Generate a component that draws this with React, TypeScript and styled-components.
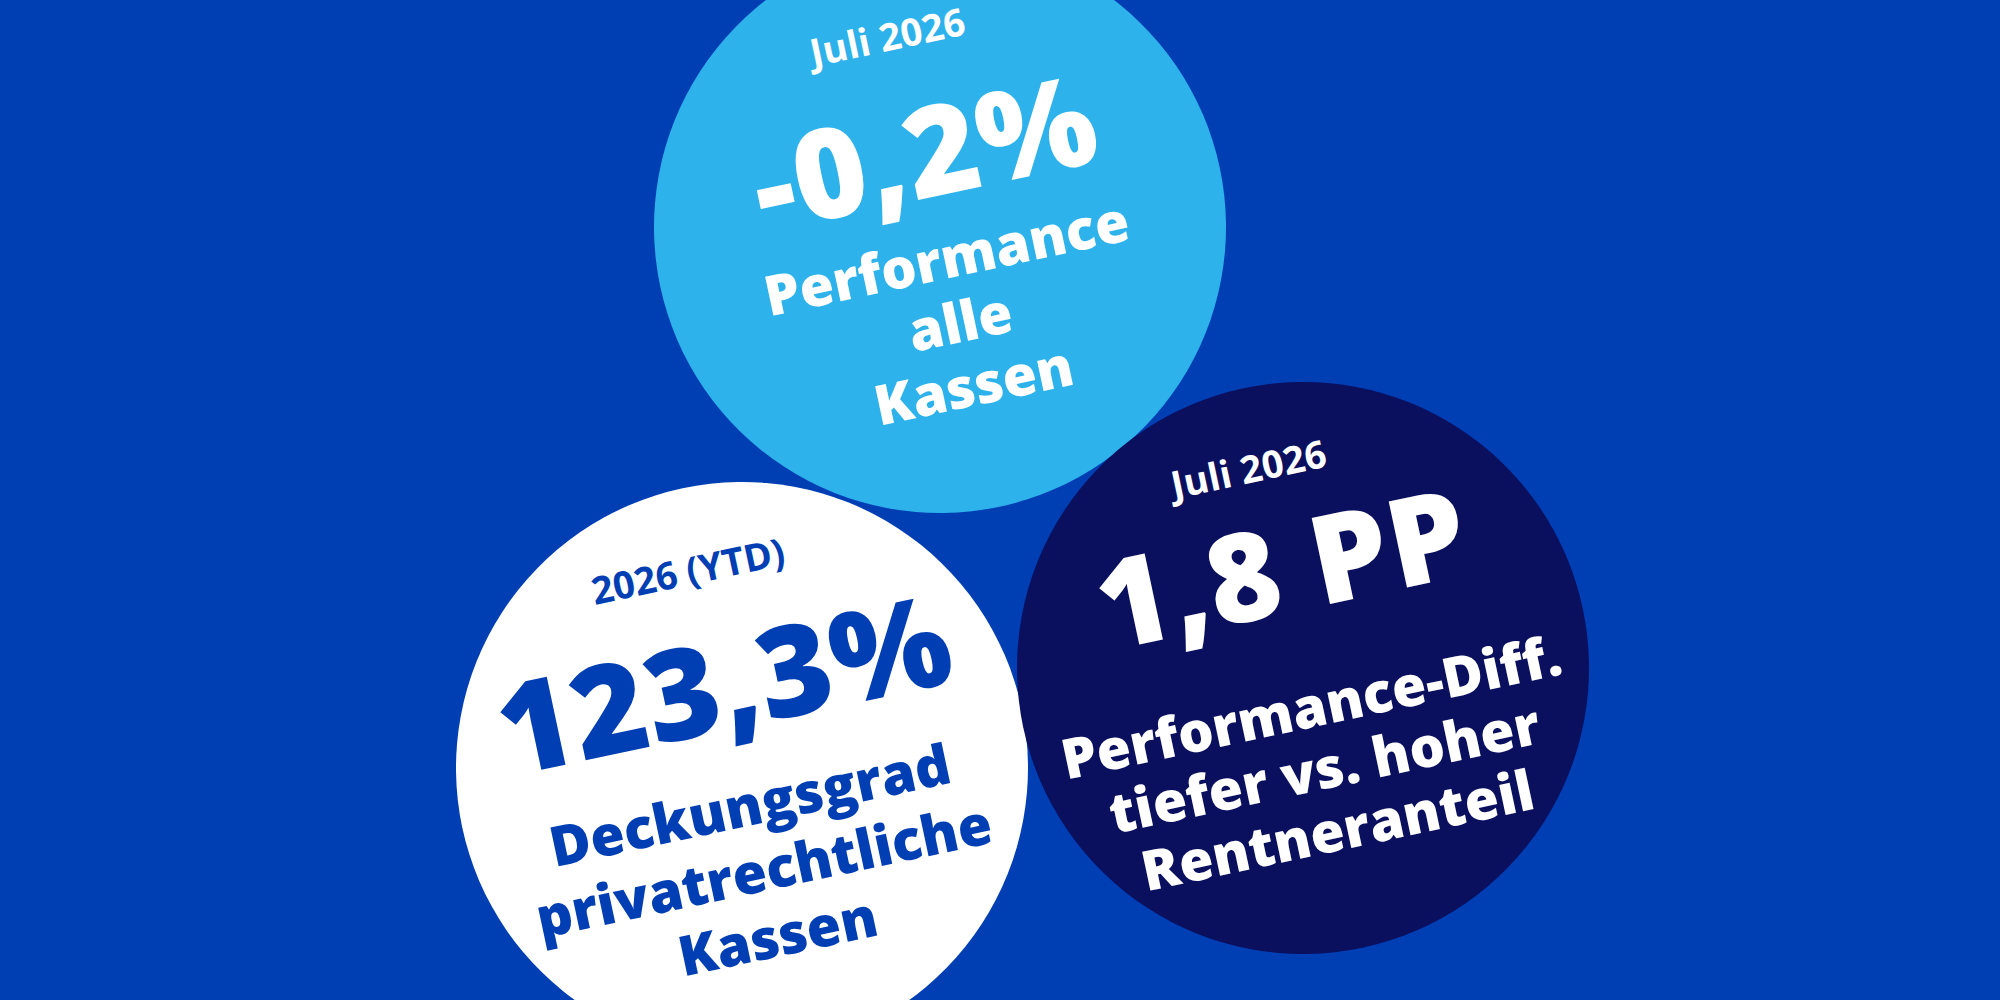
import React from "react";
import styled, { createGlobalStyle } from "styled-components";

const Global = createGlobalStyle`
  html, body { margin: 0; padding: 0; background: #003eb4; }
  body { font-family: "Open Sans", "Noto Sans", sans-serif; }
`;

const Canvas = styled.div`
  position: relative;
  width: 2000px;
  height: 1000px;
  overflow: hidden;
  background: #003eb4;
`;

const Bubble = styled.div<{ $x: number; $y: number; $bg: string; $fg: string }>`
  position: absolute;
  left: ${(p) => p.$x - 286}px;
  top: ${(p) => p.$y - 286}px;
  width: 572px;
  height: 572px;
  border-radius: 50%;
  background: ${(p) => p.$bg};
  color: ${(p) => p.$fg};
  display: flex;
  align-items: center;
  justify-content: center;
  transform: rotate(-12deg);
`;

const Content = styled.div<{ $shift: number }>`
  display: flex;
  flex-direction: column;
  align-items: center;
  text-align: center;
  white-space: nowrap;
  margin-top: ${(p) => p.$shift * 2}px;
`;

const Kicker = styled.div<{ $gap: number }>`
  font-size: 38px;
  line-height: 46px;
  font-weight: 700;
  margin-right: 24px;
  margin-bottom: ${(p) => p.$gap}px;
`;

const Figure = styled.div<{ $size: number; $gap: number }>`
  font-size: ${(p) => p.$size}px;
  line-height: 1.05;
  font-weight: 800;
  letter-spacing: 1px;
  margin-bottom: ${(p) => p.$gap}px;
`;

const Label = styled.div<{ $lh: number }>`
  font-size: 55.5px;
  line-height: ${(p) => p.$lh}px;
  font-weight: 800;
`;

type Stat = {
  x: number;
  y: number;
  bg: string;
  fg: string;
  shift: number;
  kicker: string;
  kGap: number;
  figure: string;
  fSize: number;
  fGap: number;
  lh: number;
  lines: string[];
};

const stats: Stat[] = [
  {
    x: 940, y: 227, bg: "#2db2eb", fg: "#ffffff", shift: -14,
    kicker: "Juli 2026", kGap: 30,
    figure: "-0,2%", fSize: 125, fGap: 12,
    lh: 65, lines: ["Performance", "alle", "Kassen"],
  },
  {
    x: 742, y: 768, bg: "#ffffff", fg: "#003eb4", shift: -12,
    kicker: "2026 (YTD)", kGap: 27,
    figure: "123,3%", fSize: 126, fGap: 26,
    lh: 67, lines: ["Deckungsgrad", "privatrechtliche", "Kassen"],
  },
  {
    x: 1303, y: 668, bg: "#0a0f5e", fg: "#ffffff", shift: -17,
    kicker: "Juli 2026", kGap: 15,
    figure: "1,8 PP", fSize: 123, fGap: 47,
    lh: 63, lines: ["Performance-Diff.", "tiefer vs. hoher", "Rentneranteil"],
  },
];

export default function App() {
  return (
    <>
      <Global />
      <Canvas>
        {stats.map((s, i) => (
          <Bubble key={i} $x={s.x} $y={s.y} $bg={s.bg} $fg={s.fg}>
            <Content $shift={s.shift}>
              <Kicker $gap={s.kGap}>{s.kicker}</Kicker>
              <Figure $size={s.fSize} $gap={s.fGap}>{s.figure}</Figure>
              {s.lines.map((l) => (
                <Label key={l} $lh={s.lh}>{l}</Label>
              ))}
            </Content>
          </Bubble>
        ))}
      </Canvas>
    </>
  );
}
